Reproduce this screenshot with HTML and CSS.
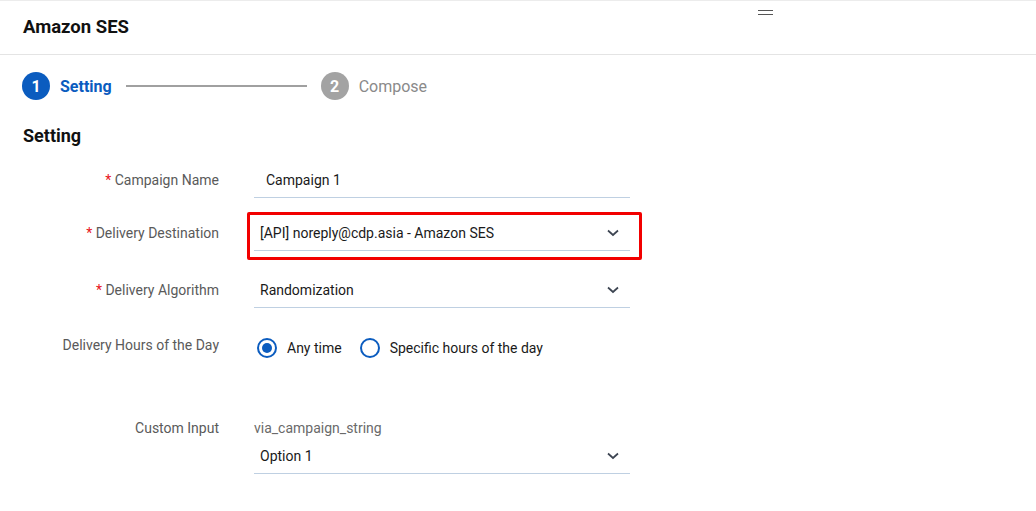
FILE: index.html
```html
<!DOCTYPE html>
<html>
<head>
<meta charset="utf-8">
<link rel="stylesheet" href="styles.css">
</head>
<body>
<header class="header">
  <h1 class="title">Amazon SES</h1>
  <span class="handle"></span>
</header>
<main class="page">
  <div class="stepper">
    <div class="step active"><span class="circle">1</span><span class="step-label">Setting</span></div>
    <div class="step-line"></div>
    <div class="step"><span class="circle">2</span><span class="step-label">Compose</span></div>
  </div>
  <h2 class="section-title">Setting</h2>
  <div class="form">
    <div class="row r1">
      <label class="label"><span class="req">*</span> Campaign Name</label>
      <div class="field input"><span class="value">Campaign 1</span></div>
    </div>
    <div class="row r2">
      <label class="label"><span class="req">*</span> Delivery Destination</label>
      <div class="field select highlighted"><span class="value">[API] noreply@cdp.asia - Amazon SES</span>
        <svg class="chev" width="12" height="8" viewBox="0 0 12 8"><polyline points="1,1.5 6,6 11,1.5" fill="none" stroke="#3d4552" stroke-width="1.7"/></svg>
      </div>
    </div>
    <div class="row r3">
      <label class="label"><span class="req">*</span> Delivery Algorithm</label>
      <div class="field select"><span class="value">Randomization</span>
        <svg class="chev" width="12" height="8" viewBox="0 0 12 8"><polyline points="1,1.5 6,6 11,1.5" fill="none" stroke="#3d4552" stroke-width="1.7"/></svg>
      </div>
    </div>
    <div class="row r4">
      <label class="label">Delivery Hours of the Day</label>
      <div class="radios">
        <span class="radio checked"><span class="dot"></span>Any time</span>
        <span class="radio"><span class="dot"></span>Specific hours of the day</span>
      </div>
    </div>
    <div class="row r5">
      <label class="label">Custom Input</label>
      <div class="custom">
        <div class="sub">via_campaign_string</div>
        <div class="field select"><span class="value">Option 1</span>
          <svg class="chev" width="12" height="8" viewBox="0 0 12 8"><polyline points="1,1.5 6,6 11,1.5" fill="none" stroke="#3d4552" stroke-width="1.7"/></svg>
        </div>
      </div>
    </div>
  </div>
</main>
</body>
</html>
```
FILE: styles.css
```css
* { box-sizing: border-box; }
html, body { margin: 0; padding: 0; background: #fff; }
body { font-family: Roboto, "Liberation Sans", Arial, sans-serif; color: #222; }

.header {
  position: relative;
  height: 55px;
  border-top: 1px solid #ececec;
  border-bottom: 1px solid #e4e4e4;
  display: flex;
  align-items: center;
  padding: 0 23px;
}
.title { margin: 0; font-size: 18.5px; font-weight: 700; color: #111; line-height: 24px; margin-top: -1px; }
.handle {
  position: absolute;
  left: 758px; top: 9px;
  width: 15px; height: 5px;
  border-top: 1.5px solid #555;
  border-bottom: 1.5px solid #555;
}

.page { padding: 0 23px; }
.stepper { display: flex; align-items: center; padding-top: 17px; height: 45px; margin-left: -1px; }
.step { display: flex; align-items: center; }
.circle {
  width: 28px; height: 28px; border-radius: 50%;
  background: #a3a3a3; color: #fff;
  display: flex; align-items: center; justify-content: center;
  font-size: 16px; font-weight: 700;
}
.step-label { margin-left: 10px; font-size: 16px; color: #8a8a8a; }
.step.active .circle { background: #0b5cbf; }
.step.active .step-label { color: #0b5cbf; font-weight: 700; }
.step-line { width: 181px; height: 2px; background: #a0a0a0; margin: 0 14px 0 14px; }

.section-title { margin: 24px 0 0; font-size: 18px; font-weight: 700; line-height: 24px; color: #111; }

.form { margin-top: 14px; }
.row { display: flex; align-items: center; }
.label {
  width: 196px; text-align: right; font-size: 14px; color: #5a5a5a;
  line-height: 20px; margin-right: 35px; flex: none;
}
.req { color: #e8141c; }
.r2 { margin-top: 17px; }
.r3 { margin-top: 21px; }
.r4 { margin-top: 27px; align-items: flex-start; }
.r5 { margin-top: 60px; align-items: flex-start; }

.field {
  position: relative;
  width: 376px; height: 36px;
  border-bottom: 1px solid #bfd0e2;
  display: flex; align-items: center;
  font-size: 14px; color: #1a1a1a;
}
.input { padding-left: 12px; }
.select { padding-left: 6px; padding-right: 11px; justify-content: space-between; }
.chev { flex: none; }
.highlighted::after {
  content: "";
  position: absolute;
  left: -7px; top: -3px; right: -12px; bottom: -10px;
  border: 3px solid #f20000;
  border-radius: 2px;
}

.radios { display: flex; align-items: center; padding-top: 3px; font-size: 14px; color: #1a1a1a; }
.radio { display: flex; align-items: center; margin-right: 15px; line-height: 20px; }
.dot {
  width: 20px; height: 20px; border-radius: 50%;
  border: 2px solid #0b5cbf; margin: 0 10px 0 3px;
  position: relative; flex: none;
}
.radio.checked .dot::after {
  content: ""; position: absolute; left: 3px; top: 3px;
  width: 10px; height: 10px; border-radius: 50%; background: #0b5cbf;
}
.custom { display: flex; flex-direction: column; }
.sub { font-size: 14px; color: #6a6a6a; line-height: 20px; height: 20px; }
```
